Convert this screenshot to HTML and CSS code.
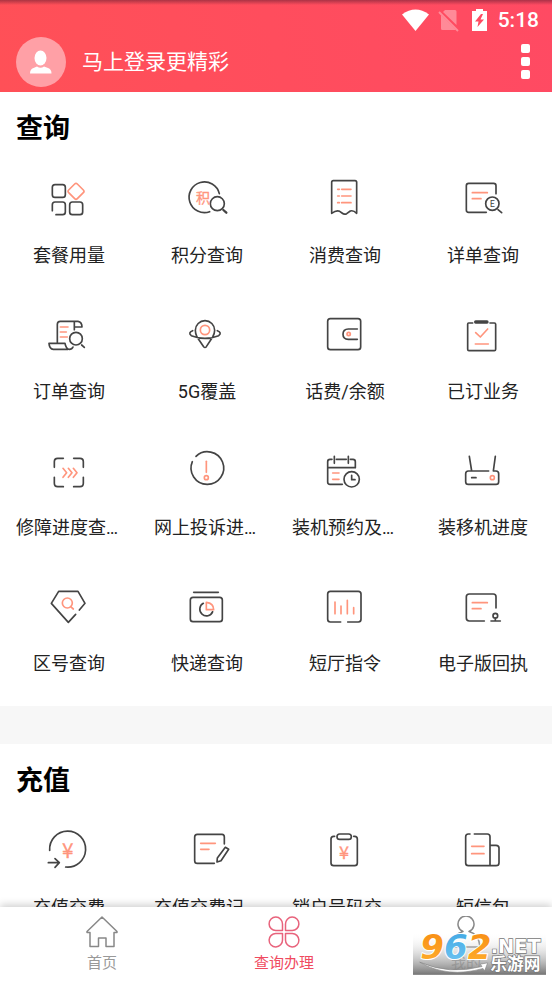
FILE: index.html
```html
<!DOCTYPE html>
<html lang="zh-CN">
<head>
<meta charset="utf-8">
<meta name="viewport" content="width=device-width, initial-scale=1">
<title>查询办理</title>
<link rel="stylesheet" href="styles.css">
</head>
<body>
<header class="header">
  <div class="status">
    <svg class="status-wifi" viewBox="0 0 27 22" aria-hidden="true"><path d="M0 5.500Q13.500 -4.500 27 5.500L13.500 22Z"/></svg>
    <svg class="status-sim" viewBox="0 0 21 23" aria-hidden="true"><path d="M7 1H17Q18.500 1 18.500 2.500V16L5 3ZM3 6 17.500 20.500Q17 21 16 21H4.500Q3 21 3 19.500Z"/><path class="slash" d="M1 3 20 22"/></svg>
    <svg class="status-battery" viewBox="0 0 15 22" aria-hidden="true"><path fill-rule="evenodd" d="M4 0H11V2H15V22H0V2H4ZM9 5 3 12.500H6.500L5.500 18 12 10.500H8.500L11 5Z"/></svg>
    <span class="clock">5:18</span>
  </div>
  <div class="userbar">
    <a class="login" href="#login">
      <svg class="avatar" viewBox="0 0 50 50" aria-hidden="true"><circle class="avatar-bg" cx="25" cy="25" r="25"/><ellipse cx="24.500" cy="21" rx="6" ry="7.500"/><path d="M14 36.500Q14 32 17.500 31L21 29.500Q24.500 32 28 29.500L32 31Q35.500 32 35.500 36.500Z"/></svg>
      <span>马上登录更精彩</span>
    </a>
    <button class="menu" type="button" aria-label="更多"><i></i><i></i><i></i></button>
  </div>
</header>

<main class="content">
  <section class="section">
    <h2>查询</h2>
    <div class="grid">
      <a class="item" href="#"><svg viewBox="117 27 180 180" aria-hidden="true"><rect x="157" y="74" width="39" height="38" rx="8"/><path class="accent" d="M224 72Q228 68 232 72L250 90Q254 94 250 98L232 116Q228 120 224 116L206 98Q202 94 206 90Z"/><path d="M157 152V134Q157 126 165 126H188Q196 126 196 134V156Q196 164 188 164H168"/><rect x="209" y="126" width="39" height="38" rx="8"/></svg><span>套餐用量</span></a>
      <a class="item" href="#"><svg viewBox="531 27 180 180" aria-hidden="true"><path d="M658 101A46 46 0 1 0 629 155"/><circle cx="652" cy="131" r="21"/><path class="thick" d="M670 150 679 158"/><text class="glyph" x="609" y="128" font-size="42">积</text></svg><span>积分查询</span></a>
      <a class="item" href="#"><svg viewBox="117 27 180 180" aria-hidden="true"><path d="M167 160V67Q167 62 172 62H237Q242 62 242 67V160Q232 150 223 153L212 161Q205 165 198 159L191 154Q181 150 167 160Z"/><path class="accent" d="M185 88H190M197 88H225M185 108H190M197 108H225M185 128H190M197 128H225"/></svg><span>消费查询</span></a>
      <a class="item" href="#"><svg viewBox="531 27 180 180" aria-hidden="true"><path d="M631 157H578Q571 157 571 150V77Q571 70 578 70H653Q660 70 660 77V101"/><path class="accent" d="M589 98H634M589 116H615"/><circle cx="649" cy="131" r="20"/><path d="M666 149 677 158"/><text class="glyph dark" x="649" y="141" font-size="27">E</text></svg><span>详单查询</span></a>

      <a class="item" href="#"><svg viewBox="117 15 180 180" aria-hidden="true"><path d="M172 127V73Q172 64 181 64H234Q246 66 246 81H223V64M223 81V89M204 148H160Q148 147 147 130H195Q198 147 208 148Q216 148 219 141"/><path class="accent" d="M181 81H204M181 96H199M181 111H202"/><circle cx="228" cy="116" r="19"/><path d="M245 135 253 142"/></svg><span>订单查询</span></a>
      <a class="item" href="#"><svg viewBox="531 15 180 180" aria-hidden="true"><path d="M591 111Q586 101 586 91A29 29 0 0 1 644 91Q644 101 638 111L619 140Q615 145 611 140ZM578 92Q563 98 574 107Q615 123 656 107Q667 98 652 92"/><circle class="accent" cx="615" cy="90" r="14"/></svg><span>5G覆盖</span></a>
      <a class="item" href="#"><svg viewBox="117 15 180 180" aria-hidden="true"><rect x="155" y="56" width="99" height="93" rx="8"/><path d="M244 87H217Q201 87 201 103Q201 118 217 118H244"/><circle class="accent" cx="218" cy="102" r="5"/></svg><span>话费/余额</span></a>
      <a class="item" href="#"><svg viewBox="531 15 180 180" aria-hidden="true"><path d="M590 69H578Q575 69 575 73V148Q575 152 579 152H655Q659 152 659 148V73Q659 69 655 69H642"/><path class="clip" d="M599 66H633"/><path class="accent" d="M599 98 613 111 635 87M598 132H637"/></svg><span>已订业务</span></a>

      <a class="item" href="#"><svg viewBox="117 3 180 180" aria-hidden="true"><path d="M163 82V65Q163 55 173 55H190M221 55H240Q250 55 250 65V82M163 112V130Q163 140 173 140H190M221 140H240Q250 140 250 130V112"/><path class="accent" d="M189 85 200 98 189 112M205 85 216 98 205 112M220 85 231 98 220 112"/></svg><span>修障进度查询</span></a>
      <a class="item" href="#"><svg viewBox="531 3 180 180" aria-hidden="true"><path d="M588 49A49 49 0 1 1 577 65"/><path class="accent" d="M619 64V97"/><circle class="accent" cx="619" cy="113" r="6"/></svg><span>网上投诉进度</span></a>
      <a class="item" href="#"><svg viewBox="117 3 180 180" aria-hidden="true"><path d="M199 133H162Q155 133 155 126V65Q155 58 162 58H168M181 58H211M223 58H231Q238 58 238 65V83H155M175 49V70M217 49V70"/><path class="accent" d="M170 99H189M170 118H189"/><circle cx="227" cy="118" r="23"/><path d="M227 106V119H237"/></svg><span>装机预约及查询</span></a>
      <a class="item" href="#"><svg viewBox="531 3 180 180" aria-hidden="true"><path d="M638 93H577Q569 93 569 101V125Q569 133 577 133H660Q668 133 668 125V101Q668 93 660 93H652L658 49M587 93 580 49M587 113H600"/><circle class="accent" cx="649" cy="113" r="6"/></svg><span>装移机进度</span></a>

      <a class="item" href="#"><svg viewBox="117 6 180 180" aria-hidden="true"><path d="M227 118 205 142 154 85 176 49H234L255 85 238 105"/><circle class="accent" cx="202" cy="84" r="15"/><path class="accent" d="M212 95 220 102"/></svg><span>区号查询</span></a>
      <a class="item" href="#"><svg viewBox="531 6 180 180" aria-hidden="true"><path d="M581 52H655"/><rect x="571" y="67" width="96" height="73" rx="8"/><path d="M610 85A20 20 0 1 0 638 110"/><path class="accent" d="M619 82V104H641Q641 84 619 82Z"/></svg><span>快递查询</span></a>
      <a class="item" href="#"><svg viewBox="117 6 180 180" aria-hidden="true"><path d="M194 141H163Q155 141 155 133V57Q155 49 163 49H247Q255 49 255 57V133Q255 141 247 141H215"/><path class="accent" d="M177 81V116M195 93V116M214 76V116M233 98V116"/></svg><span>短厅指令</span></a>
      <a class="item" href="#"><svg viewBox="531 6 180 180" aria-hidden="true"><path d="M625 138H580Q571 138 571 129V65Q571 57 580 57H652Q660 57 660 65V99"/><path class="accent" d="M589 83H634M589 101H615"/><circle cx="658" cy="122" r="7"/><path d="M658 129V137M645 138H673"/></svg><span>电子版回执</span></a>
    </div>
  </section>

  <section class="section">
    <h2>充值</h2>
    <div class="grid">
      <a class="item" href="#"><svg viewBox="117 243 180 180" aria-hidden="true"><path d="M149 331A54 54 0 1 1 197 381M145 368H177M165 356 178 368 165 382"/><text class="glyph" x="203" y="353" font-size="62">¥</text></svg><span>充值交费</span></a>
      <a class="item" href="#"><svg viewBox="531 243 180 180" aria-hidden="true"><path d="M643 370H592Q584 370 584 362V291Q584 283 592 283H666Q673 283 673 291V312M676 322 686 328 663 362 651 366 652 354Z"/><path class="accent" d="M602 310H646M602 328H627"/></svg><span>充值交费记录</span></a>
      <a class="item" href="#"><svg viewBox="117 243 180 180" aria-hidden="true"><path d="M176 289H173Q165 289 165 297V369Q165 377 173 377H236Q244 377 244 369V297Q244 289 236 289H233"/><rect x="183" y="282" width="43" height="16" rx="8"/><text class="glyph" x="204" y="358" font-size="54">¥</text></svg><span>销户号码交费</span></a>
      <a class="item" href="#"><svg viewBox="531 243 180 180" aria-hidden="true"><path d="M582 282H577Q569 282 569 290V369Q569 377 577 377H660Q669 377 669 368V324Q669 316 660 316H643M595 282H634Q642 282 642 290V377"/><path class="accent" d="M587 319H624M587 341H624"/></svg><span>短信包</span></a>
    </div>
  </section>
</main>

<nav class="tabs">
  <a class="tab" href="#home"><svg viewBox="0 0 32 32" aria-hidden="true"><path d="M1 15.500 16 1 31 15.500V16.500H28V30.500H20V22H12.500V30.500H4V16.500H1Z"/></svg><span>首页</span></a>
  <a class="tab active" href="#query" aria-current="page"><svg viewBox="0 0 32 32" aria-hidden="true"><path d="M14.500 14.500H8A6.700 6.700 0 1 1 14.500 8ZM17.500 14.500V8A6.700 6.700 0 1 1 24 14.500ZM14.500 17.500V24A6.700 6.700 0 1 1 8 17.500ZM17.500 17.500H24A6.700 6.700 0 1 1 17.500 24Z"/></svg><span>查询办理</span></a>
  <a class="tab" href="#mine"><svg viewBox="0 0 32 32" aria-hidden="true"><path d="M13 15.500A8 8 0 1 1 19 15.500Q29 18 30 31H2Q3 18 13 15.500Z"/></svg><span>我的</span></a>
  <svg class="watermark" viewBox="411 577 399 128" role="img" aria-label="962.NET 乐游网">
    <defs>
      <linearGradient id="shade" x1="0" y1="0" x2="0" y2="1"><stop offset="0" stop-color="#fff" stop-opacity="0"/><stop offset="1" stop-color="#747474"/></linearGradient>
      <linearGradient id="orange" x1="0" y1="0" x2="0" y2="1"><stop offset="0" stop-color="#f78a12"/><stop offset="1" stop-color="#ffb02e"/></linearGradient>
      <linearGradient id="blue" x1="0" y1="0" x2="0" y2="1"><stop offset="0" stop-color="#3da5e2"/><stop offset="1" stop-color="#72c7f3"/></linearGradient>
    </defs>
    <rect x="411" y="577" width="399" height="128" fill="url(#shade)"/>
    <text class="digits" x="433" y="657"><tspan fill="url(#orange)">9</tspan><tspan fill="url(#blue)">6</tspan><tspan fill="url(#orange)">2</tspan></text>
    <path class="swoosh" d="M431 667Q520 706 618 680L613 673 635 669 626 693 621 686Q515 716 431 667Z"/>
    <text class="net" x="644" y="641">.NET</text>
    <text class="site" x="643" y="692">乐游网</text>
  </svg>
</nav>
</body>
</html>
```
FILE: styles.css
```css
* {
  box-sizing: border-box;
}

body {
  margin: 0;
  height: 100vh;
  display: flex;
  flex-direction: column;
  overflow: hidden;
  background: #fff;
  color: #222;
  font-family: Roboto, "Noto Sans CJK SC", sans-serif;
}

a {
  color: inherit;
  text-decoration: none;
}

.header {
  flex: none;
  color: #fff;
  background:
    linear-gradient(rgba(70, 20, 40, 0.45), rgba(70, 20, 40, 0) 5px),
    linear-gradient(75deg, #ff5057, #ff4a63);
}

.status {
  height: 36px;
  padding: 4px 13px 0 0;
  display: flex;
  justify-content: flex-end;
  align-items: center;
}

.status svg {
  fill: #fff;
}

.status-wifi {
  width: 27px;
  height: 22px;
  margin-right: 9px;
}

.status-sim {
  width: 21px;
  height: 23px;
  margin-right: 13px;
  opacity: 0.35;
}

.slash {
  stroke: #fff;
  stroke-width: 2;
}

.status-battery {
  width: 15px;
  height: 22px;
  margin-right: 11px;
}

.clock {
  font-size: 21px;
  line-height: 24px;
  font-weight: 500;
}

.userbar {
  height: 56px;
  padding: 0 22px 5px 16px;
  display: flex;
  justify-content: space-between;
  align-items: center;
}

.login {
  display: flex;
  align-items: center;
  gap: 16px;
  font-size: 21px;
  line-height: 30px;
}

.avatar {
  width: 50px;
  height: 50px;
  fill: #fff;
}

.avatar-bg {
  fill: #ffa0a6;
}

.menu {
  display: flex;
  flex-direction: column;
  gap: 4px;
  padding: 0;
  border: 0;
  background: none;
}

.menu i {
  width: 9px;
  height: 9px;
  border-radius: 2px;
  background: #fff;
}

.content {
  flex: 1;
  min-height: 0;
  overflow: hidden;
}

.section {
  padding: 19px 0 29px;
}

.section + .section {
  border-top: 38px solid #f7f7f7;
}

h2 {
  margin: 0 16px 22px;
  font-size: 27px;
  line-height: 36px;
  font-weight: 700;
  color: #000;
}

.grid {
  display: grid;
  grid-template-columns: repeat(4, minmax(0, 1fr));
  row-gap: 36px;
}

.item {
  display: flex;
  flex-direction: column;
  align-items: center;
  gap: 14px;
  padding: 0 16px;
  font-size: 18px;
  line-height: 26px;
}

.item span {
  max-width: 100%;
  overflow: hidden;
  text-overflow: ellipsis;
  white-space: nowrap;
}

.item svg {
  width: 60px;
  height: 60px;
  fill: none;
  stroke: #444;
  stroke-width: 5;
  stroke-linecap: round;
  stroke-linejoin: round;
}

.item .accent {
  stroke: #ff957d;
}

.item .thick {
  stroke-width: 7;
}

.item .clip {
  stroke-width: 10;
}

.item .glyph {
  fill: #ff957d;
  stroke: #ff957d;
  stroke-width: 1;
  text-anchor: middle;
  font-family: "Noto Sans CJK SC", sans-serif;
}

.item .dark {
  fill: #444;
  stroke: none;
}

.tabs {
  flex: none;
  position: relative;
  display: flex;
  justify-content: space-between;
  padding: 9px 70px 8px 86px;
  background: #fff;
  box-shadow: 0 -2px 8px rgba(0, 0, 0, 0.2);
}

.tab {
  display: flex;
  flex-direction: column;
  align-items: center;
  gap: 5px;
  font-size: 15px;
  line-height: 20px;
  color: #999;
}

.tab svg {
  width: 32px;
  height: 32px;
  fill: none;
  stroke: #888;
  stroke-width: 1.5;
  stroke-linejoin: round;
}

.tab.active {
  color: #f04b5f;
}

.tab.active svg {
  stroke: #e8637c;
}

.tabs .watermark {
  position: absolute;
  right: 6px;
  bottom: 6px;
  width: 133px;
  height: 43px;
}

.digits {
  font: italic bold 102px "DejaVu Sans", sans-serif;
  stroke: #fff;
  stroke-width: 6;
  paint-order: stroke;
}

.net,
.site {
  fill: #fff;
  stroke: #777;
  stroke-width: 4;
  paint-order: stroke;
}

.net {
  font: bold 58px "DejaVu Sans", sans-serif;
}

.site {
  font: bold 50px "Noto Sans CJK SC", sans-serif;
}

.swoosh {
  fill: #fff;
  stroke: #888;
  stroke-width: 2;
}
```
